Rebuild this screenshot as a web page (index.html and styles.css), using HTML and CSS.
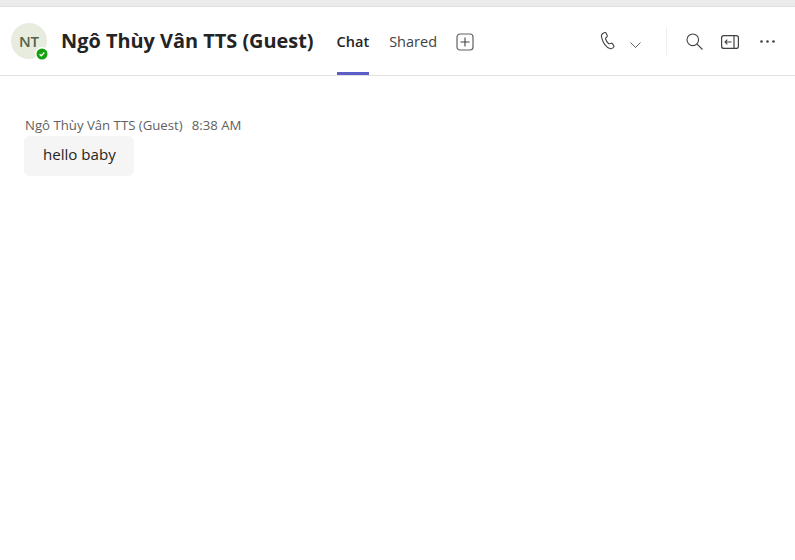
FILE: index.html
```html
<!DOCTYPE html>
<html lang="vi">
<head>
<meta charset="utf-8">
<title>Chat</title>
<link rel="stylesheet" href="styles.css">
</head>
<body>
<div class="topstrip"></div>
<header class="header">
  <div class="avatar">NT
    <span class="badge"><svg viewBox="0 0 12 12" width="12" height="12"><circle cx="6" cy="6" r="5.5" fill="#13a10e"/><path d="M3.6 6.2l1.7 1.6 3.1-3.3" fill="none" stroke="#fff" stroke-width="1.3"/></svg></span>
  </div>
  <h1 class="title">Ngô Thùy Vân TTS (Guest)</h1>
  <nav class="tabs">
    <a class="tab active">Chat</a>
    <a class="tab">Shared</a>
    <svg class="plus" viewBox="0 0 18 18" width="18" height="18"><rect x="1" y="1" width="16" height="16" rx="3" fill="none" stroke="#616161" stroke-width="1.2"/><path d="M9 4.500v9M4.500 9h9" stroke="#424242" stroke-width="1.100"/></svg>
  </nav>
  <div class="actions">
    <svg class="phone" viewBox="0 0 18 20" width="18" height="20"><path d="M4.2 2.2l1.6-.6c.6-.2 1.100.1 1.400.6l1 2.300c.2.500.1 1-.3 1.400L6.800 7c-.3.300-.3.600-.2 1 .5 1.600 1.500 3.300 2.900 4.500.3.300.6.300 1 .2l1.600-.5c.5-.2 1 0 1.300.4l1.400 2c.3.500.3 1.100-.2 1.500l-1.100 1c-.7.600-1.700.8-2.600.500C6.900 16.300 3.900 11.500 2.500 6.200c-.3-1.700.3-3.300 1.700-4z" fill="none" stroke="#424242" stroke-width="1.100"/></svg>
    <svg class="chev" viewBox="0 0 11 6" width="11" height="6"><path d="M.5.500l5 5 5-5" fill="none" stroke="#616161" stroke-width="1"/></svg>
    <span class="divider"></span>
    <svg class="search" viewBox="0 0 17 17" width="17" height="17"><circle cx="6.800" cy="6.800" r="5.800" fill="none" stroke="#424242" stroke-width="1.100"/><path d="M10.800 10.800l5.700 5.700" stroke="#424242" stroke-width="1.100"/></svg>
    <svg class="panel" viewBox="0 0 18 14" width="18" height="14"><rect x=".6" y=".6" width="16.800" height="12.800" rx="2.200" fill="none" stroke="#424242" stroke-width="1.200"/><path d="M13 .6v12.800" stroke="#424242" stroke-width="1.200"/><path d="M10.500 7H4M6.300 4.700L4 7l2.300 2.300" fill="none" stroke="#424242" stroke-width="1.100"/></svg>
    <svg class="more" viewBox="0 0 15 3" width="15" height="3"><circle cx="1.500" cy="1.500" r="1.300" fill="#424242"/><circle cx="7.500" cy="1.500" r="1.300" fill="#424242"/><circle cx="13.500" cy="1.500" r="1.300" fill="#424242"/></svg>
  </div>
</header>
<main class="messages">
  <div class="meta"><span>Ngô Thùy Vân TTS (Guest)</span><span>8:38 AM</span></div>
  <div class="bubble">hello baby</div>
</main>
</body>
</html>
```
FILE: styles.css
```css
* { box-sizing: border-box; }
html, body { margin: 0; height: 100%; background: #fff; }
body { font-family: "Open Sans", "Noto Sans", sans-serif; color: #242424; overflow: hidden; }
.topstrip { height: 7px; background: #ebebeb; border-bottom: 1px solid #e0e0e0; }
.header { height: 69px; display: flex; align-items: center; border-bottom: 1px solid #e0e0e0; padding-left: 11px; }
.avatar { position: relative; width: 36px; height: 36px; border-radius: 50%; background: #e7ecdf; color: #54634a; font-size: 15px; font-weight: 600; display: flex; align-items: center; justify-content: center; flex: none; }
.badge { position: absolute; right: -2px; bottom: -2px; width: 14px; height: 14px; border-radius: 50%; background: #fff; display: flex; align-items: center; justify-content: center; }
.title { margin: 0 0 0 14px; font-size: 19.9px; font-weight: 700; white-space: nowrap; color: #242424; line-height: 26px; }
.tabs { display: flex; align-items: center; align-self: stretch; margin-left: 23px; }
.tab { font-size: 14.5px; color: #424242; height: 100%; display: flex; align-items: center; margin-right: 19px; border-bottom: 3px solid transparent; padding-top: 3px; }
.tab.active { font-weight: 600; color: #242424; border-bottom-color: #5b5fc7; margin-right: 20px; }
.plus { margin-top: 1px; }
.actions { margin-left: auto; display: flex; align-items: center; padding-right: 20px; }
.phone { margin-top: 0; }
.chev { margin: 7px 0 0 13px; }
.divider { width: 1px; height: 28px; background: #efefef; margin: 0 19px 0 25px; }
.search { margin-top: 1px; }
.panel { margin: 1px 0 0 18px; }
.more { margin: 1px 0 0 21px; }
.messages { padding: 40px 0 0 24px; }
.meta { display: flex; gap: 9px; font-size: 13.2px; color: #616161; line-height: 18px; padding-left: 1px; }
.bubble { display: inline-block; margin-top: 2px; height: 40px; padding: 0 18px 0 19px; background: #f5f5f5; border-radius: 6px; font-size: 15.1px; line-height: 36px; color: #242424; }
```
